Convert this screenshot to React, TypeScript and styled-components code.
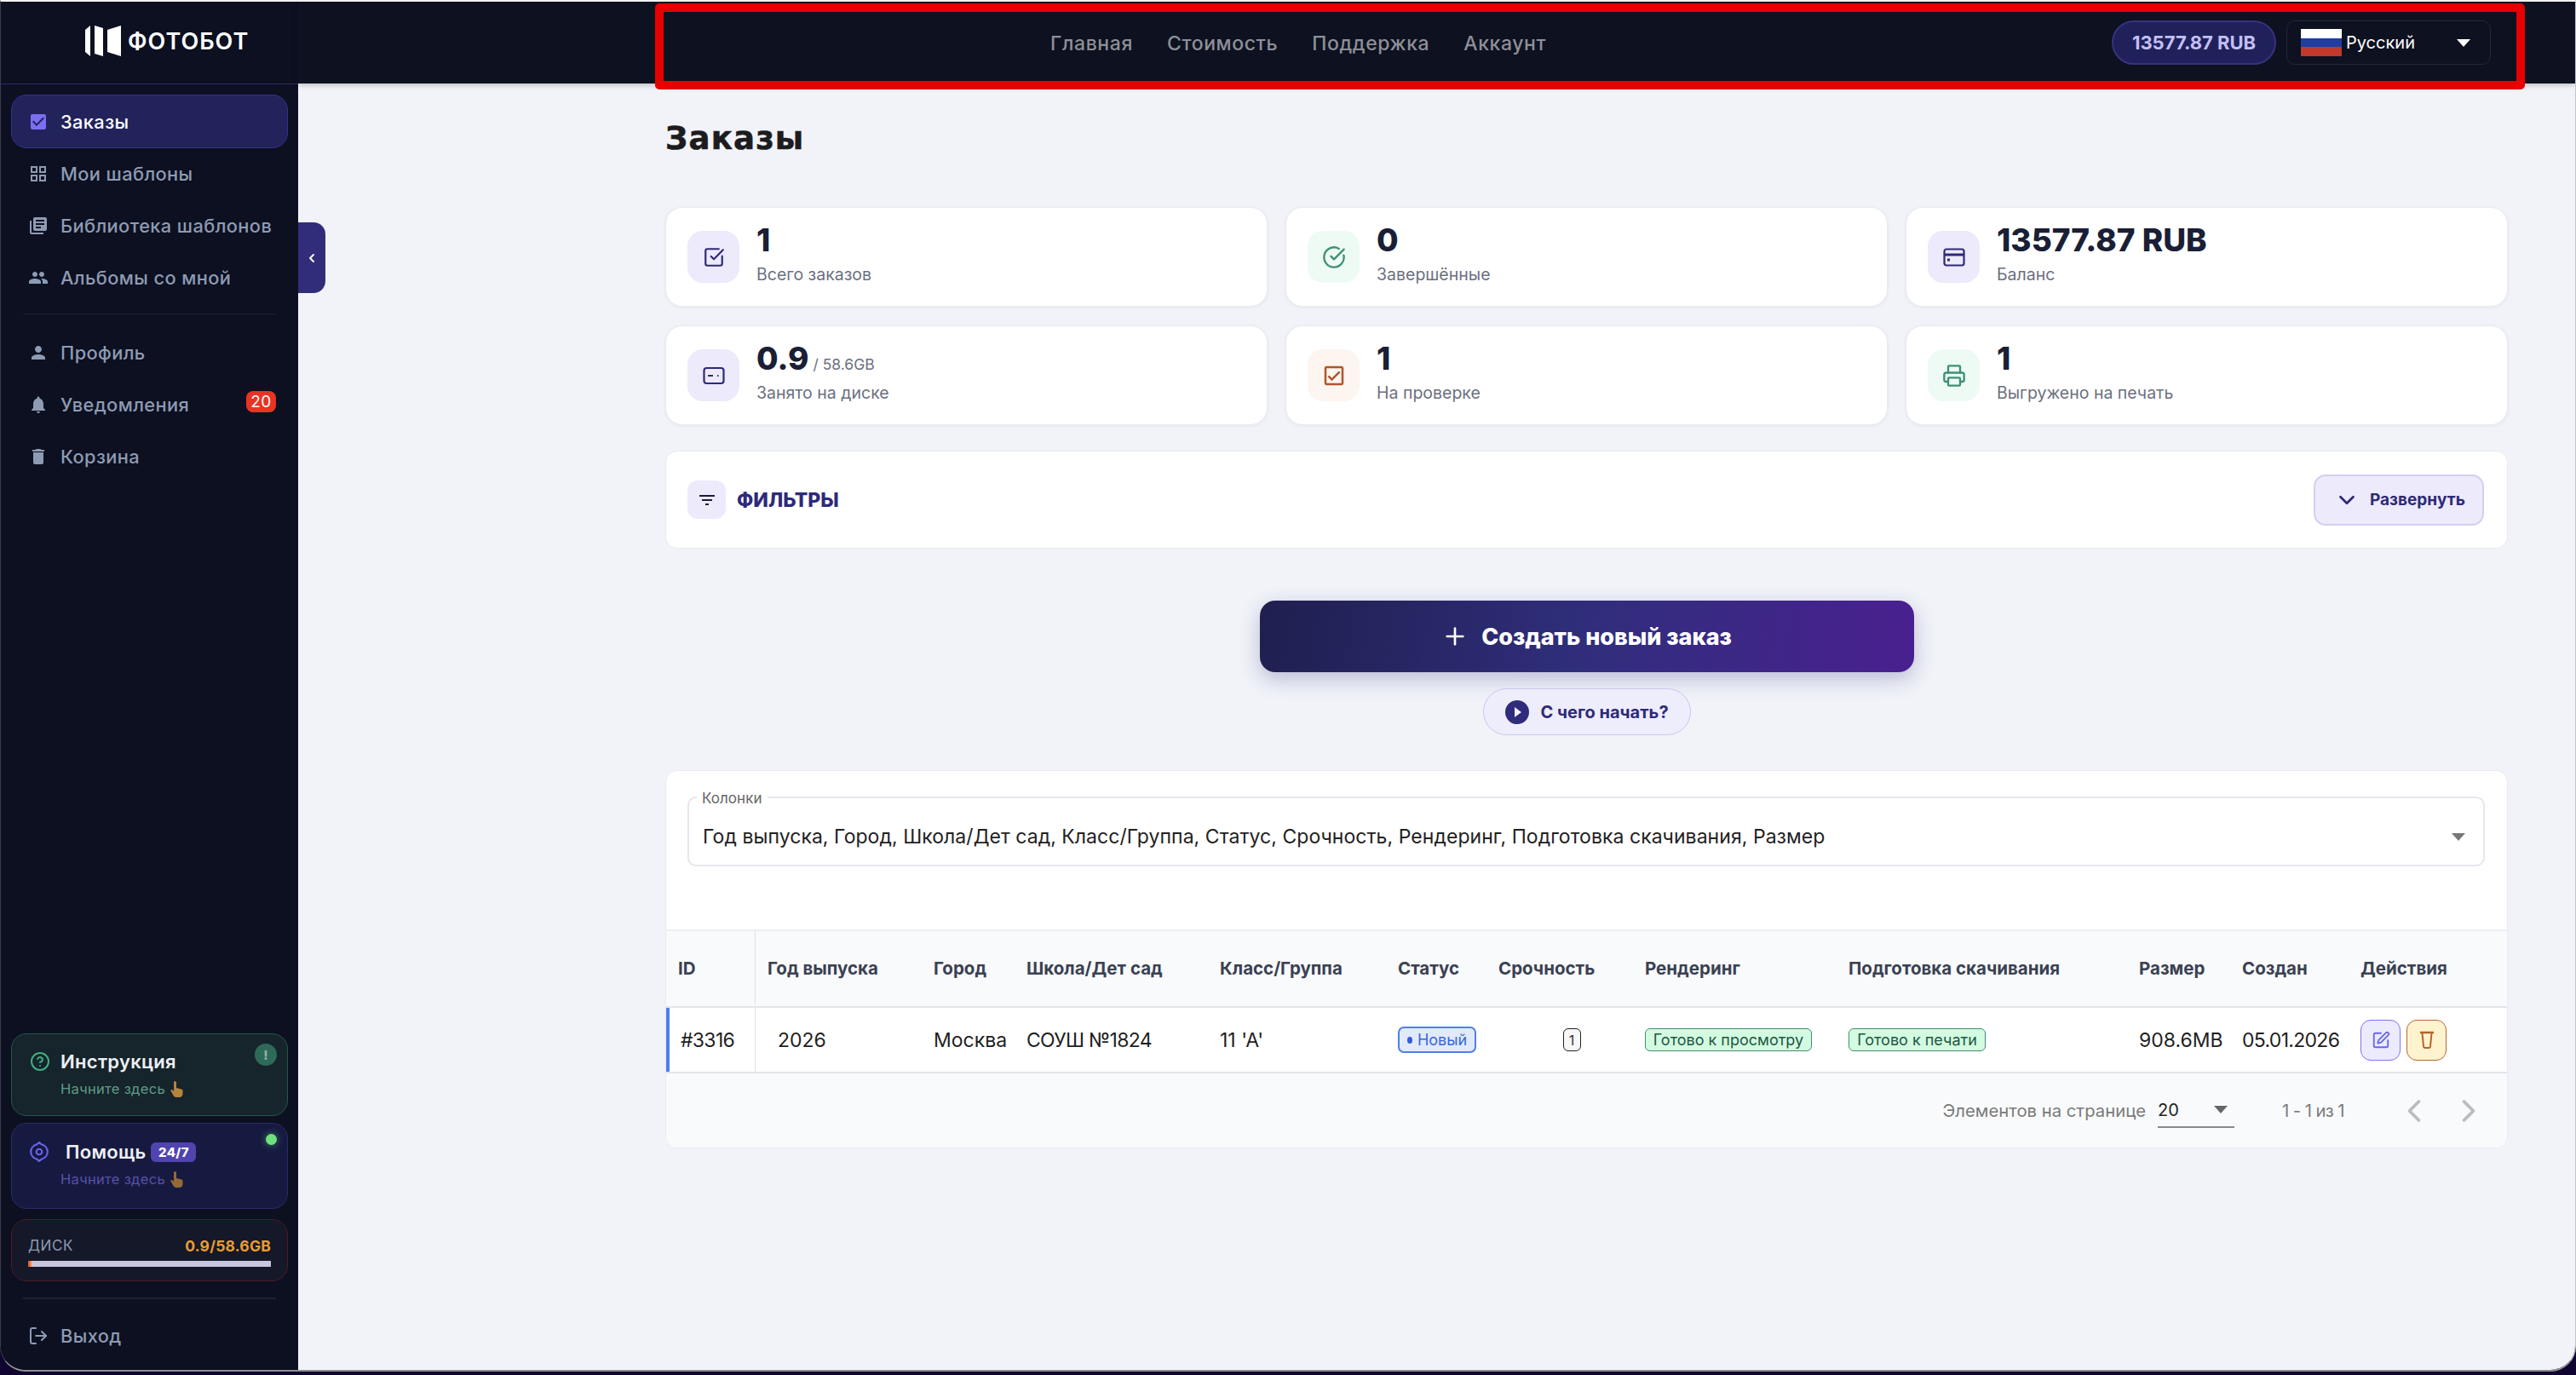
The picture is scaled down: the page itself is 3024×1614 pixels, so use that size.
import * as React from 'react';
import styled, { createGlobalStyle } from 'styled-components';
import { ChevronDown, ChevronLeft, ChevronRight, CircleCheckBig, CircleHelp, LogOut, Plus, Printer, SquareCheckBig, SquarePen } from 'lucide-react';
import { MdCheckBox, MdDelete, MdFilterList, MdGridView, MdLibraryBooks, MdNotifications, MdOutlineCheckBox, MdPeople, MdPerson } from 'react-icons/md';

const GlobalStyle = createGlobalStyle`
  html, body { margin: 0; padding: 0; background: #0f0530; }
  body { font-family: Inter, "Noto Sans", sans-serif; }
  * { box-sizing: border-box; }
`;

const Shell = styled.div`
  position: relative;
  display: flex;
  width: 3024px;
  height: 1614px;
  overflow: hidden;
  padding-bottom: 4px;
`;

const Frame = styled.div`
  position: relative;
  display: flex;
  width: 100%;
  height: 100%;
  overflow: hidden;
  border-radius: 0 0 30px 30px;
  border-top: 2px solid #f2f2f4;
  border-left: 1px solid #3a3d4a;
  border-right: 1px solid #c4c4c8;
  border-bottom: 2px solid #8f8f8f;
`;

const RedMark = styled.div`
  position: absolute;
  left: 769px;
  top: 4px;
  width: 2195px;
  height: 101px;
  border: 10px solid #e60000;
  border-radius: 5px;
  pointer-events: none;
`;

const Sidebar = styled.aside`
  display: flex;
  flex-direction: column;
  flex: 0 0 349px;
  background: #0c1020;
  padding-bottom: 10px;
`;

const LogoBar = styled.div`
  display: flex;
  align-items: center;
  gap: 7px;
  height: 97px;
  padding: 0 0 4px 99px;
  border-bottom: 1px solid #2b2a68;
`;

const LogoText = styled.span`
  color: #fff;
  font-size: 27px;
  font-weight: 600;
  letter-spacing: 1px;
`;

const MenuList = styled.nav`
  display: flex;
  flex-direction: column;
  padding: 12px 12px 0;
`;

const MenuItem = styled.div<{ $active?: boolean }>`
  display: flex;
  align-items: center;
  gap: 14px;
  height: ${p => (p.$active ? '63px' : '61px')};
  margin-bottom: ${p => (p.$active ? '-1px' : '0')};
  padding-left: 19px;
  border-radius: 18px;
  border: 1px solid ${p => (p.$active ? '#34328a' : 'transparent')};
  background: ${p => (p.$active ? '#22235a' : 'transparent')};
  color: ${p => (p.$active ? '#fff' : '#8e9bb3')};
  font-size: 21.800px;
  font-weight: 500;
  letter-spacing: 0.4px;
  svg { flex: 0 0 24px; color: ${p => (p.$active ? '#7b6ff5' : '#8e9bb3')}; }
`;

const MenuDivider = styled.div`
  height: 1px;
  margin: 12px 14px 14px;
  background: #1d2132;
`;

const Badge = styled.span`
  display: flex;
  align-items: center;
  justify-content: center;
  width: 35px;
  height: 25px;
  margin: -7px 13px 0 auto;
  border-radius: 8px;
  background: #ea3323;
  color: #fff;
  font-size: 19px;
  font-weight: 400;
`;

const SideBottom = styled.div`
  display: flex;
  flex-direction: column;
  margin-top: auto;
  padding: 0 12px;
`;

const PromoCard = styled.div<{ $tone: 'green' | 'blue' }>`
  position: relative;
  display: flex;
  flex-direction: column;
  height: ${p => (p.$tone === 'green' ? '97px' : '101px')};
  padding: ${p => (p.$tone === 'green' ? '16px' : '17px')} 22px 0;
  margin-bottom: ${p => (p.$tone === 'green' ? '8px' : '12px')};
  border-radius: 18px;
  border: 1px solid ${p => (p.$tone === 'green' ? '#25574d' : '#2a2a6a')};
  background: ${p => (p.$tone === 'green' ? '#16242b' : '#171a40')};
`;

const PromoHead = styled.div`
  display: flex;
  align-items: center;
  height: 32px;
  color: #eef0f4;
  font-size: 22px;
  font-weight: 600;
  letter-spacing: 0.3px;
`;

const PromoIcon = styled.span<{ $color: string; $gap: number }>`
  display: flex;
  width: ${p => p.$gap}px;
  flex: none;
  margin-left: -1px;
  color: ${p => p.$color};
`;

const PromoSub = styled.div<{ $color: string }>`
  display: flex;
  align-items: center;
  gap: 6px;
  margin: 6px 0 0 35px;
  color: ${p => p.$color};
  font-size: 16.500px;
  letter-spacing: 0.3px;
`;

const AlertDot = styled.span`
  position: absolute;
  top: 11px;
  right: 12px;
  display: flex;
  align-items: center;
  justify-content: center;
  width: 26px;
  height: 26px;
  border-radius: 50%;
  background: #2e6a58;
  color: #8fb0a4;
  font-size: 15px;
  font-weight: 800;
`;

const OnlineDot = styled.span`
  position: absolute;
  top: 12px;
  right: 12px;
  width: 13px;
  height: 13px;
  border-radius: 50%;
  background: #6fe07f;
  box-shadow: 0 0 8px #6fe07f88;
`;

const Tag = styled.span`
  display: flex;
  align-items: center;
  justify-content: center;
  width: 53px;
  height: 23px;
  margin-left: 6px;
  border-radius: 6px;
  background: #5044ae;
  color: #fff;
  font-size: 15px;
  font-weight: 800;
  letter-spacing: 0.4px;
`;

const DiskCard = styled.div`
  height: 73px;
  padding: 22px 19px 0;
  border-radius: 18px;
  border: 1px solid #4a1c24;
  background: #141828;
`;

const DiskHead = styled.div`
  display: flex;
  justify-content: space-between;
  align-items: center;
  height: 16px;
  color: #8e9bb3;
  font-size: 17px;
  letter-spacing: 0.6px;
  b { color: #ea9c2f; font-weight: 700; letter-spacing: 0.2px; font-size: 17.500px; }
`;

const DiskTrack = styled.div`
  height: 7px;
  margin-top: 10px;
  background: #c8c6dc;
`;

const DiskFill = styled.div`
  height: 100%;
  background: linear-gradient(90deg, #e2502f, #f09a4a);
`;

const SideDivider = styled.div`
  height: 2px;
  margin: 19px 14px 0;
  background: #1d2132;
`;

const ExitItem = styled(MenuItem)`
  margin-top: 12px;
`;

const Toggle = styled.div`
  position: absolute;
  top: 259px;
  left: 349px;
  z-index: 3;
  display: flex;
  align-items: center;
  justify-content: center;
  width: 32px;
  height: 83px;
  border-radius: 0 14px 14px 0;
  background: #322d7a;
  color: #fff;
`;

const Content = styled.div`
  display: flex;
  flex-direction: column;
  flex: 1;
  min-width: 0;
  background: #f1f3f9;
`;

const TopBar = styled.header`
  display: flex;
  align-items: center;
  flex: 0 0 96px;
  padding: 0 99px 0 883px;
  background: #0d1120;
  box-shadow: 0 2px 6px rgba(0, 0, 0, 0.22);
`;

const TopNav = styled.nav`
  display: flex;
  gap: 40px;
  padding-top: 2px;
`;

const TopLink = styled.a`
  color: #8d9098;
  font-size: 23px;
  font-weight: 500;
  letter-spacing: 0.6px;
`;

const TopRight = styled.div`
  display: flex;
  gap: 12px;
  margin-left: auto;
`;

const BalancePill = styled.div`
  display: flex;
  align-items: center;
  justify-content: center;
  width: 193px;
  height: 52px;
  border-radius: 26px;
  border: 2px solid #36327f;
  background: #20215a;
  color: #c3bff5;
  font-size: 22px;
  font-weight: 700;
`;

const LangSelect = styled.div`
  display: flex;
  align-items: center;
  width: 240px;
  height: 52px;
  padding: 0 23px 0 16px;
  border-radius: 10px;
  border: 1px solid #23283a;
  color: #fff;
  font-size: 20px;
`;

const Flag = styled.svg`
  flex: none;
  margin-right: 5px;
`;

const Caret = styled.span<{ $color?: string }>`
  width: 0;
  height: 0;
  margin-left: auto;
  border-left: 8px solid transparent;
  border-right: 8px solid transparent;
  border-top: 9px solid ${p => p.$color || '#fff'};
`;

const Main = styled.main`
  display: flex;
  flex-direction: column;
  padding: 46px 79px 0 431px;
`;

const Title = styled.h1`
  margin: 0 0 61px;
  color: #1c1c1e;
  font-family: "DejaVu Sans", sans-serif;
  font-size: 37px;
  line-height: 38px;
  font-weight: 700;
  letter-spacing: 1.200px;
  -webkit-text-stroke: 0.6px #1c1c1e;
`;

const StatGrid = styled.section`
  display: grid;
  grid-template-columns: repeat(3, 1fr);
  gap: 22px 21px;
`;

const StatCard = styled.div`
  display: flex;
  align-items: center;
  height: 117px;
  padding: 0 25px;
  border-radius: 20px;
  border: 1px solid #e9ebf1;
  background: #fff;
  box-shadow: 0 1px 4px rgba(30, 30, 70, 0.06);
`;

const IconBox = styled.div<{ $bg: string; $color: string }>`
  display: flex;
  align-items: center;
  justify-content: center;
  flex: 0 0 61px;
  height: 61px;
  margin-right: 20px;
  border-radius: 18px;
  background: ${p => p.$bg};
  color: ${p => p.$color};
`;

const StatText = styled.div`
  padding-bottom: 5px;
`;

const StatValue = styled.div`
  display: flex;
  align-items: baseline;
  height: 34px;
  color: #1a1f36;
  font-size: 37px;
  line-height: 34px;
  font-weight: 800;
  small { margin-left: 5px; color: #6b7080; font-size: 17.500px; font-weight: 400; }
`;

const StatLabel = styled.div`
  margin-top: 11px;
  color: #6b7080;
  font-size: 19.500px;
  line-height: 24px;
`;

const FilterCard = styled.section`
  display: flex;
  align-items: center;
  height: 115px;
  margin-top: 30px;
  padding: 0 27px 0 25px;
  border-radius: 14px;
  border: 1px solid #e9ebf1;
  background: #fff;
`;

const FilterIcon = styled.div`
  display: flex;
  align-items: center;
  justify-content: center;
  width: 45px;
  height: 45px;
  margin-right: 13px;
  border-radius: 12px;
  background: #eceafb;
  color: #1c1c3a;
`;

const FilterTitle = styled.div`
  color: #2e2a78;
  font-size: 23px;
  font-weight: 800;
`;

const ExpandButton = styled.div`
  display: flex;
  align-items: center;
  gap: 12px;
  width: 200px;
  height: 60px;
  margin-left: auto;
  padding-left: 22px;
  border-radius: 14px;
  border: 2px solid #d2cff0;
  background: #eceafb;
  color: #2e2a78;
  font-size: 19px;
  font-weight: 700;
`;

const CreateButton = styled.div`
  display: flex;
  align-items: center;
  justify-content: center;
  gap: 15px;
  align-self: center;
  width: 768px;
  height: 84px;
  margin-top: 61px;
  border-radius: 18px;
  background: linear-gradient(100deg, #1f1f4f 0%, #302e7c 50%, #4a2090 100%);
  box-shadow: 0 8px 24px rgba(46, 42, 120, 0.28);
  color: #fff;
  font-size: 27px;
  font-weight: 800;
`;

const HelpPill = styled.div`
  display: flex;
  align-items: center;
  gap: 14px;
  align-self: center;
  width: 244px;
  height: 55px;
  margin-top: 19px;
  padding-left: 25px;
  border-radius: 28px;
  border: 1px solid #cac7ea;
  background: #eeedfc;
  color: #2e2a78;
  font-size: 20px;
  font-weight: 700;
`;

const PlayDot = styled.span`
  display: flex;
  align-items: center;
  justify-content: center;
  width: 28px;
  height: 28px;
  border-radius: 50%;
  background: #2f2c7c;
  &::after {
    content: '';
    margin-left: 2px;
    border-left: 8px solid #f3f2ff;
    border-top: 6px solid transparent;
    border-bottom: 6px solid transparent;
  }
`;

const TableCard = styled.section`
  display: flex;
  flex-direction: column;
  margin-top: 41px;
  height: 444px;
  overflow: hidden;
  border-radius: 14px;
  border: 1px solid #e9ebf1;
  background: #fff;
`;

const ColumnsField = styled.div`
  position: relative;
  display: flex;
  align-items: center;
  height: 82px;
  margin: 30px 26px 74px 25px;
  padding: 12px 21px 0 16px;
  border-radius: 10px;
  border: 2px solid #e6e7ec;
  color: #222;
  font-size: 23px;
  letter-spacing: 0.05px;
`;

const FieldLabel = styled.label`
  position: absolute;
  top: -9px;
  left: 9px;
  padding: 0 6px;
  background: #fff;
  color: #666;
  font-size: 17px;
  line-height: 18px;
`;

const COLUMNS = '105px 209px 109px 227px 209px 118px 172px 239px 341px 121px 139px 171px';

const HeadRow = styled.div`
  display: grid;
  grid-template-columns: ${COLUMNS};
  align-items: stretch;
  height: 92px;
  padding-bottom: 2px;
  border-top: 2px solid #eceef3;
  border-bottom: 2px solid #e4e5ea;
  background: #f9fafc;
`;

const HeadCell = styled.div<{ $first?: boolean; $pad?: number }>`
  display: flex;
  align-items: center;
  padding-left: ${p => p.$pad || 0}px;
  border-right: ${p => (p.$first ? '1px solid #e0e1e6' : '0')};
  color: #3a4152;
  font-size: 20.500px;
  font-weight: 700;
`;

const BodyRow = styled.div`
  display: grid;
  grid-template-columns: ${COLUMNS};
  height: 77px;
  border-bottom: 2px solid #e4e5ea;
`;

const BodyCell = styled.div<{ $first?: boolean; $center?: boolean; $pad?: number; $tight?: boolean }>`
  display: flex;
  align-items: center;
  gap: 7px;
  justify-content: ${p => (p.$center ? 'center' : 'flex-start')};
  padding-left: ${p => p.$pad || 0}px;
  border-left: ${p => (p.$first ? '4px solid #4f7df0' : '0')};
  border-right: ${p => (p.$first ? '1px solid #e0e1e6' : '0')};
  color: #1f1f1f;
  font-size: 23px;
  letter-spacing: ${p => (p.$tight ? '-0.7px' : '0')};
`;

const StatusChip = styled.span`
  display: flex;
  align-items: center;
  justify-content: center;
  gap: 6px;
  width: 92px;
  height: 31px;
  border-radius: 7px;
  border: 2px solid #4f7df0;
  background: #e1eafa;
  color: #3a66e0;
  font-size: 18px;
  &::before {
    content: '';
    width: 6px;
    height: 8px;
    border-radius: 50%;
    background: #2f5ce0;
  }
`;

const UrgencyChip = styled.span`
  display: flex;
  align-items: center;
  justify-content: center;
  width: 21px;
  height: 27px;
  border-radius: 6px;
  border: 1.500px solid #222;
  background: #f7f7f7;
  color: #333;
  font-size: 16px;
`;

const ReadyChip = styled.span<{ $width: number }>`
  display: flex;
  align-items: center;
  justify-content: center;
  width: ${p => p.$width}px;
  height: 27px;
  border-radius: 6px;
  border: 1.500px solid #3f9070;
  background: #d3fbe2;
  color: #22573f;
  font-size: 18px;
  white-space: nowrap;
`;

const ActionButton = styled.span<{ $tone: 'edit' | 'del' }>`
  display: flex;
  align-items: center;
  justify-content: center;
  width: 47px;
  height: 48px;
  border-radius: 12px;
  border: 1.500px solid ${p => (p.$tone === 'edit' ? '#7a74f0' : '#b9682f')};
  background: ${p => (p.$tone === 'edit' ? '#ecebfd' : '#fdf3cf')};
  color: ${p => (p.$tone === 'edit' ? '#6a63ee' : '#b5642b')};
`;

const Pager = styled.div`
  display: flex;
  align-items: center;
  flex: 1;
  padding: 0 23px 0 0;
  justify-content: flex-end;
  background: #f9fafc;
  color: #7a7a7a;
  font-size: 20.300px;
`;

const PageSize = styled.div`
  display: flex;
  align-items: center;
  width: 90px;
  height: 40px;
  margin: 0 56px 0 14px;
  padding: 0 8px 0 0;
  border-bottom: 2px solid #8a8a8a;
  color: #222;
  font-size: 20px;
`;

const PageRange = styled.span`
  letter-spacing: -0.6px;
`;

const PageNav = styled.span`
  display: flex;
  margin-left: 60px;
  gap: 20px;
  color: #bcbcbc;
`;

function LogoMark() {
  return (
    <svg width="43" height="37" viewBox="0 0 43 37" fill="#fff">
      <polygon points="0,5 6,0 6,36 0,31" />
      <polygon points="11,0 21,3 21,36 11,33" />
      <polygon points="26,5 42,0 42,36 26,31" />
    </svg>
  );
}

function HelpRing() {
  return (
    <svg width="22" height="24" viewBox="0 0 20 22" fill="none" stroke="#6a63ee" strokeWidth="2">
      <circle cx="10" cy="11" r="3" />
      <path d="M7.500 3 10 1l2.500 2c3.500 1 6.500 4 6.500 8s-3 7-6.500 8L10 21l-2.500-2C4 18 1 15 1 11s3-7 6.500-8z" />
    </svg>
  );
}

function PointingHand({ tone }: { tone: string }) {
  return (
    <svg width="15" height="19" viewBox="0 0 15 19">
      <path fill={tone} d="M4 1.500a1.500 1.500 0 0 1 3 0V8l6 1.500c1 .3 1.500 1 1.500 2V15c0 2-1.500 4-4 4H7c-2 0-3-1-4-3L.5 11.500c-.5-1 1-2 2-1L4 12z" />
    </svg>
  );
}

function DriveIcon() {
  return (
    <svg width="26" height="22" viewBox="0 0 26 22" fill="none" stroke="currentColor" strokeWidth="2.200">
      <rect x="1.500" y="2" width="23" height="18" rx="3" />
      <path d="M6 11h6M17 11h1.500" />
    </svg>
  );
}

function CardIcon() {
  return (
    <svg width="26" height="22" viewBox="0 0 26 22" fill="none" stroke="currentColor" strokeWidth="2.200">
      <rect x="1.500" y="1.500" width="23" height="19" rx="2.500" />
      <path d="M1.500 8h23" strokeWidth="3" />
      <path d="M5 14h3" strokeWidth="3" />
    </svg>
  );
}

function CupIcon() {
  return (
    <svg width="20" height="22" viewBox="0 0 20 22" fill="none" stroke="currentColor" strokeWidth="2">
      <path d="M2 2h16" strokeWidth="2.500" />
      <path d="M4.500 3 6 18c.1 1 .8 2 2 2h4c1.200 0 1.900-1 2-2l1.500-15" />
    </svg>
  );
}

const stats = [
  { id: 'total', bg: '#eceafb', color: '#2e2a78', icon: <SquareCheckBig size={26} strokeWidth={2} />, value: '1', label: 'Всего заказов' },
  { id: 'done', bg: '#eefbf5', color: '#3f9070', icon: <CircleCheckBig size={28} strokeWidth={2} />, value: '0', label: 'Завершённые' },
  { id: 'balance', bg: '#eceafb', color: '#2e2a78', icon: <CardIcon />, value: '13577.87 RUB', label: 'Баланс' },
  { id: 'disk', bg: '#eceafb', color: '#2e2a78', icon: <DriveIcon />, value: '0.9', small: '/ 58.6GB', label: 'Занято на диске' },
  { id: 'review', bg: '#fdf5f0', color: '#b0562a', icon: <MdOutlineCheckBox size={30} />, value: '1', label: 'На проверке' },
  { id: 'print', bg: '#eefbf5', color: '#3f9070', icon: <Printer size={28} strokeWidth={2} />, value: '1', label: 'Выгружено на печать' },
];

const heads = ['Год выпуска', 'Город', 'Школа/Дет сад', 'Класс/Группа', 'Статус', 'Срочность', 'Рендеринг', 'Подготовка скачивания', 'Размер', 'Создан', 'Действия'];

export default function App() {
  return (
    <Shell>
      <GlobalStyle />
      <Frame>
        <Sidebar>
          <LogoBar>
            <LogoMark />
            <LogoText>ФОТОБОТ</LogoText>
          </LogoBar>
          <MenuList>
            <MenuItem $active><MdCheckBox size={24} />Заказы</MenuItem>
            <MenuItem><MdGridView size={24} />Мои шаблоны</MenuItem>
            <MenuItem><MdLibraryBooks size={24} />Библиотека шаблонов</MenuItem>
            <MenuItem><MdPeople size={24} />Альбомы со мной</MenuItem>
            <MenuDivider />
            <MenuItem><MdPerson size={24} />Профиль</MenuItem>
            <MenuItem><MdNotifications size={24} />Уведомления<Badge>20</Badge></MenuItem>
            <MenuItem><MdDelete size={24} />Корзина</MenuItem>
          </MenuList>
          <SideBottom>
            <PromoCard $tone="green">
              <AlertDot>!</AlertDot>
              <PromoHead>
                <PromoIcon $color="#3fae80" $gap={36}><CircleHelp size={24} strokeWidth={2} /></PromoIcon>
                Инструкция
              </PromoHead>
              <PromoSub $color="#5e9c88">Начните здесь<PointingHand tone="#b5843c" /></PromoSub>
            </PromoCard>
            <PromoCard $tone="blue">
              <OnlineDot />
              <PromoHead>
                <PromoIcon $color="#6a63ee" $gap={42}><HelpRing /></PromoIcon>
                Помощь<Tag>24/7</Tag>
              </PromoHead>
              <PromoSub $color="#5750a8">Начните здесь<PointingHand tone="#946a34" /></PromoSub>
            </PromoCard>
            <DiskCard>
              <DiskHead><span>ДИСК</span><b>0.9/58.6GB</b></DiskHead>
              <DiskTrack><DiskFill style={{ width: `${(0.9 / 58.6) * 100}%` }} /></DiskTrack>
            </DiskCard>
            <SideDivider />
            <ExitItem><LogOut size={24} strokeWidth={2} />Выход</ExitItem>
          </SideBottom>
        </Sidebar>
        <Toggle><ChevronLeft size={16} strokeWidth={3} /></Toggle>
        <Content>
          <TopBar>
            <TopNav>
              <TopLink>Главная</TopLink>
              <TopLink>Стоимость</TopLink>
              <TopLink>Поддержка</TopLink>
              <TopLink>Аккаунт</TopLink>
            </TopNav>
            <TopRight>
              <BalancePill>13577.87 RUB</BalancePill>
              <LangSelect>
                <Flag width="48" height="32" viewBox="0 0 48 32">
                  <rect width="48" height="11" fill="#fff" />
                  <rect y="11" width="48" height="10" fill="#1d3fa3" />
                  <rect y="21" width="48" height="11" fill="#c0392b" />
                </Flag>
                Русский
                <Caret />
              </LangSelect>
            </TopRight>
          </TopBar>
          <Main>
            <Title>Заказы</Title>
            <StatGrid>
              {stats.map(s => (
                <StatCard key={s.id}>
                  <IconBox $bg={s.bg} $color={s.color}>{s.icon}</IconBox>
                  <StatText>
                    <StatValue>{s.value}{s.small && <small>{s.small}</small>}</StatValue>
                    <StatLabel>{s.label}</StatLabel>
                  </StatText>
                </StatCard>
              ))}
            </StatGrid>
            <FilterCard>
              <FilterIcon><MdFilterList size={24} /></FilterIcon>
              <FilterTitle>ФИЛЬТРЫ</FilterTitle>
              <ExpandButton><ChevronDown size={30} strokeWidth={2.200} />Развернуть</ExpandButton>
            </FilterCard>
            <CreateButton><Plus size={32} strokeWidth={2} />Создать новый заказ</CreateButton>
            <HelpPill><PlayDot />С чего начать?</HelpPill>
            <TableCard>
              <ColumnsField>
                <FieldLabel>Колонки</FieldLabel>
                Год выпуска, Город, Школа/Дет сад, Класс/Группа, Статус, Срочность, Рендеринг, Подготовка скачивания, Размер
                <Caret $color="#777" />
              </ColumnsField>
              <HeadRow>
                <HeadCell $first $pad={14}>ID</HeadCell>
                {heads.map((h, i) => (
                  <HeadCell key={h} $pad={i === 0 ? 14 : 0}>{h}</HeadCell>
                ))}
              </HeadRow>
              <BodyRow>
                <BodyCell $first $pad={13} $tight>#3316</BodyCell>
                <BodyCell $pad={26}>2026</BodyCell>
                <BodyCell>Москва</BodyCell>
                <BodyCell $tight>СОУШ №1824</BodyCell>
                <BodyCell>11 'А'</BodyCell>
                <BodyCell><StatusChip>Новый</StatusChip></BodyCell>
                <BodyCell $center><UrgencyChip>1</UrgencyChip></BodyCell>
                <BodyCell><ReadyChip $width={196}>Готово к просмотру</ReadyChip></BodyCell>
                <BodyCell><ReadyChip $width={161}>Готово к печати</ReadyChip></BodyCell>
                <BodyCell>908.6MB</BodyCell>
                <BodyCell $tight>05.01.2026</BodyCell>
                <BodyCell>
                  <ActionButton $tone="edit"><SquarePen size={22} strokeWidth={2} /></ActionButton>
                  <ActionButton $tone="del"><CupIcon /></ActionButton>
                </BodyCell>
              </BodyRow>
              <Pager>
                Элементов на странице
                <PageSize>20<Caret $color="#666" /></PageSize>
                <PageRange>1 - 1 из 1</PageRange>
                <PageNav><ChevronLeft size={44} strokeWidth={2} /><ChevronRight size={44} strokeWidth={2} /></PageNav>
              </Pager>
            </TableCard>
          </Main>
        </Content>
      </Frame>
      <RedMark />
    </Shell>
  );
}
